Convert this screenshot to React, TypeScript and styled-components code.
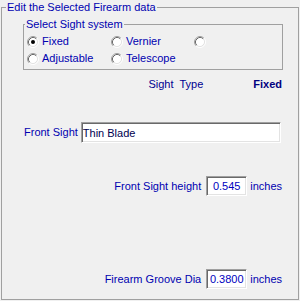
import styled, { createGlobalStyle } from 'styled-components'

const GlobalStyle = createGlobalStyle`
  html, body {
    margin: 0;
    padding: 0;
    background: #f0f0f0;
  }
  body {
    font-family: 'Liberation Sans', Arial, sans-serif;
    font-size: 11px;
  }
`

const Page = styled.div`
  width: 300px;
  height: 301px;
  padding: 0 1px;
  box-sizing: border-box;
  background: #f0f0f0;
  overflow: hidden;
`

const Frame = styled.fieldset`
  width: 298px;
  height: 300px;
  box-sizing: border-box;
  margin: 0;
  padding: 0;
  border: 1px solid #a0a0a0;
  min-inline-size: 0;
`

const Legend = styled.legend<{ $offset: number }>`
  margin-left: ${({ $offset }) => $offset}px;
  padding: 0 1px;
  line-height: 14px;
  font-size: 11px;
  color: #0000b0;
`

const SystemBox = styled.fieldset`
  width: 260px;
  box-sizing: border-box;
  margin: 3px 0 0 21px;
  padding: 0;
  border: 1px solid #a0a0a0;
  min-inline-size: 0;
`

const RadioGrid = styled.div`
  display: grid;
  grid-template-columns: 84px 83px auto;
  grid-auto-rows: 17px;
  padding: 2px 0 2px 3px;
`

const RadioItem = styled.label`
  display: flex;
  align-items: center;
  gap: 3px;
  color: #0000b0;
  line-height: 13px;
`

const Row = styled.div<{ $top: number }>`
  display: flex;
  align-items: center;
  justify-content: flex-end;
  margin-top: ${({ $top }) => $top}px;
  padding-right: 16px;
  line-height: 13px;
`

const LeftRow = styled(Row)`
  justify-content: flex-start;
  padding-left: 22px;
  gap: 3px;
`

const Label = styled.span`
  color: #0000b0;
  white-space: pre;
`

const TypeLabel = styled.span`
  color: #000090;
  white-space: pre;
  margin-right: 50px;
`

const TypeValue = styled.span`
  color: #000080;
  font-weight: bold;
`

const Field = styled.input<{ $w: number; $h: number; $center?: boolean; $ink: string }>`
  width: ${({ $w }) => $w}px;
  height: ${({ $h }) => $h}px;
  box-sizing: border-box;
  margin: 0;
  padding: 0 ${({ $center }) => ($center ? 0 : 1)}px;
  border-style: solid;
  border-width: 1px;
  border-color: #a0a0a0 #ffffff #ffffff #a0a0a0;
  box-shadow: inset 1px 1px #696969, inset -1px -1px #e3e3e3;
  background: #ffffff;
  font-family: 'Liberation Sans', Arial, sans-serif;
  font-size: 11px;
  color: ${({ $ink }) => $ink};
  text-align: ${({ $center }) => ($center ? 'center' : 'left')};
  outline: none;
`

const NumRow = styled(Row)`
  gap: 0;
`

const NumLabel = styled(Label)`
  margin-right: 5px;
`

const Unit = styled(Label)`
  margin-left: 3px;
`

const Radio = ({ checked }: { checked?: boolean }) => (
  <svg width="12" height="12" viewBox="0 0 12 12">
    <circle cx="6" cy="6" r="4.5" fill="#ffffff" />
    <path d="M2.11 9.89 A5.5 5.5 0 0 1 9.89 2.11" fill="none" stroke="#a0a0a0" />
    <path d="M9.89 2.11 A5.5 5.5 0 0 1 2.11 9.89" fill="none" stroke="#ffffff" />
    <path d="M2.82 9.18 A4.5 4.5 0 0 1 9.18 2.82" fill="none" stroke="#696969" />
    <path d="M9.18 2.82 A4.5 4.5 0 0 1 2.82 9.18" fill="none" stroke="#e3e3e3" />
    {checked && <circle cx="6" cy="6" r="2" fill="#000000" />}
  </svg>
)

const App = () => {
  return (
    <Page>
      <GlobalStyle />
      <Frame>
        <Legend $offset={4}>Edit the Selected Firearm data</Legend>
        <SystemBox>
          <Legend $offset={1}>Select Sight system</Legend>
          <RadioGrid>
            <RadioItem>
              <Radio checked />
              Fixed
            </RadioItem>
            <RadioItem>
              <Radio />
              Vernier
            </RadioItem>
            <RadioItem>
              <Radio />
            </RadioItem>
            <RadioItem>
              <Radio />
              Adjustable
            </RadioItem>
            <RadioItem>
              <Radio />
              Telescope
            </RadioItem>
          </RadioGrid>
        </SystemBox>

        <Row $top={8}>
          <TypeLabel>{'Sight  Type'}</TypeLabel>
          <TypeValue>Fixed</TypeValue>
        </Row>

        <LeftRow $top={31}>
          <Label>Front Sight</Label>
          <Field readOnly value="Thin Blade" $w={200} $h={21} $ink="#000050" />
        </LeftRow>

        <NumRow $top={33}>
          <NumLabel>Front Sight height</NumLabel>
          <Field readOnly value="0.545" $w={41} $h={20} $center $ink="#0000c0" />
          <Unit>inches</Unit>
        </NumRow>

        <NumRow $top={73}>
          <NumLabel>Firearm Groove Dia</NumLabel>
          <Field readOnly value="0.3800" $w={41} $h={20} $center $ink="#0000c0" />
          <Unit>inches</Unit>
        </NumRow>
      </Frame>
    </Page>
  )
}

export default App
